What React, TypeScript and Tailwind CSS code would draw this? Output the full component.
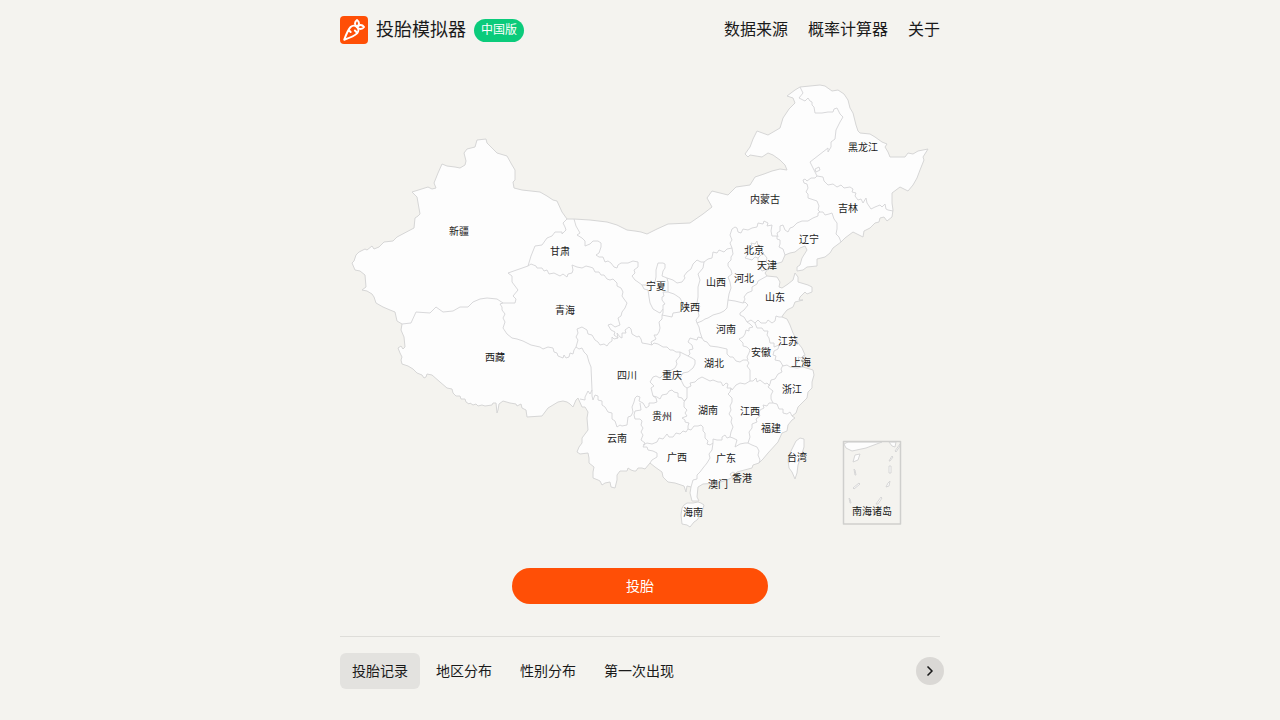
import React, { useState } from 'react';
import { Carrot, ChevronRight } from 'lucide-react';

interface RegionLabel {
  name: string;
  x: number;
  y: number;
}

const LABELS: RegionLabel[] = [
  { name: '黑龙江', x: 863, y: 148 },
  { name: '内蒙古', x: 765, y: 200 },
  { name: '吉林', x: 848, y: 209 },
  { name: '新疆', x: 459, y: 232 },
  { name: '辽宁', x: 809, y: 240 },
  { name: '甘肃', x: 560, y: 252 },
  { name: '北京', x: 754, y: 251 },
  { name: '天津', x: 767, y: 266 },
  { name: '河北', x: 744, y: 279 },
  { name: '山西', x: 716, y: 283 },
  { name: '宁夏', x: 656, y: 287 },
  { name: '山东', x: 775, y: 298 },
  { name: '陕西', x: 690, y: 308 },
  { name: '青海', x: 565, y: 311 },
  { name: '河南', x: 726, y: 330 },
  { name: '江苏', x: 788, y: 342 },
  { name: '安徽', x: 761, y: 353 },
  { name: '西藏', x: 495, y: 358 },
  { name: '上海', x: 801, y: 363 },
  { name: '湖北', x: 714, y: 364 },
  { name: '四川', x: 627, y: 376 },
  { name: '重庆', x: 672, y: 376 },
  { name: '浙江', x: 792, y: 390 },
  { name: '湖南', x: 708, y: 411 },
  { name: '江西', x: 750, y: 412 },
  { name: '贵州', x: 662, y: 417 },
  { name: '福建', x: 771, y: 429 },
  { name: '云南', x: 617, y: 439 },
  { name: '广西', x: 677, y: 458 },
  { name: '广东', x: 726, y: 459 },
  { name: '台湾', x: 797, y: 458 },
  { name: '香港', x: 742, y: 479 },
  { name: '澳门', x: 718, y: 485 },
  { name: '海南', x: 693, y: 513 },
  { name: '南海诸岛', x: 872, y: 512 },
];

const MAINLAND =
  'M352 263 L354 261 356 255 359 252 365 249 367 250 372 246 374 249 379 247 384 242 393 241 397 237 414 228 415 218 418 216 420 214 417 197 412 192 428 187 432 189 436 188 434 183 438 173 442 164 447 166 455 167 460 168 465 165 466 161 464 153 467 149 475 147 477 140 486 139 487 143 492 148 497 153 507 156 512 165 515 170 515 180 513 182 514 188 522 190 540 192 547 196 553 200 557 201 562 212 567 219 574 219 590 220 607 222 617 225 627 230 635 231 641 232 647 234 657 229 668 224 690 223 703 214 712 207 707 198 712 191 728 195 736 187 750 185 755 177 764 174 772 171 780 169 787 170 785 165 780 160 773 155 768 153 762 157 750 155 748 157 745 154 750 147 753 139 757 131 768 135 780 128 783 118 789 109 795 103 793 98 787 96 795 90 800 87 820 85 825 86 832 91 838 90 844 94 848 100 850 108 853 113 856 125 858 131 860 133 870 134 875 137 882 142 887 144 885 147 888 152 890 157 905 157 908 153 913 154 918 151 928 149 923 157 924 160 920 170 917 178 913 185 908 191 900 187 892 193 892 203 893 210 892 217 887 221 884 217 880 218 879 222 875 223 870 228 864 231 863 237 853 232 845 238 841 242 833 248 830 253 825 257 817 259 817 266 807 267 803 270 797 271 797 267 800 265 802 258 807 250 805 246 800 248 795 252 790 253 785 255 782 262 775 264 768 269 765 273 767 276 777 277 780 282 779 287 782 288 788 284 793 280 795 273 798 277 798 282 808 285 812 287 812 292 807 294 805 292 800 297 799 300 803 300 795 302 793 307 787 310 783 315 782 317 787 319 790 325 793 333 798 343 802 348 805 355 801 361 805 365 803 367 813 370 814 375 812 382 812 388 808 392 807 398 803 402 798 407 796 413 792 416 795 418 792 420 788 425 787 431 782 433 778 442 768 453 763 459 759 463 753 465 752 468 737 472 733 477 727 480 717 483 703 484 698 487 697 497 699 501 692 501 690 493 691 487 687 486 686 492 684 486 675 483 668 482 663 477 662 472 655 467 650 463 645 469 642 468 638 468 636 471 634 471 631 470 628 468 627 471 625 471 620 471 617 475 617 480 616 484 615 488 611 487 610 482 605 483 602 485 600 481 598 480 593 478 593 472 594 467 589 463 589 458 588 453 580 454 577 452 579 447 582 443 582 438 588 430 587 418 588 412 585 407 582 407 578 398 576 400 573 407 570 404 567 402 563 401 558 402 548 408 542 416 527 417 526 410 522 408 521 404 517 406 516 404 510 403 503 401 499 404 498 410 497 413 496 403 493 403 492 405 485 406 482 405 478 406 476 404 473 405 470 403 469 404 466 402 465 399 461 399 460 396 456 396 453 393 452 389 447 388 440 382 432 375 427 374 426 377 424 378 422 375 417 373 413 369 408 366 402 364 401 360 402 357 400 353 398 348 401 346 403 349 405 347 404 337 401 330 402 324 397 321 395 312 390 310 383 307 376 303 374 297 372 294 367 291 362 290 366 287 365 275 360 271 355 270 Z';

// Shared lines between neighbouring provinces
const BORDERS: string[] = [
  'M402 324 L411 323 416 312 430 313 436 307 443 312 453 311 460 307 468 307 473 302 480 299 487 298 497 299 503 303 515 303 516 299 513 296 518 290 512 282 512 276 508 273 528 266 531 256 535 246 542 245 547 238 552 236 555 232 562 232 562 234 566 230 565 227 563 223 567 219',
  'M528 266 L531 264 536 266 537 268 542 268 544 271 547 270 549 274 554 273 560 276 563 274 567 277 568 274 572 273 573 270 572 265 577 267 582 268 586 266 590 267 593 268 595 272 599 272 601 275 604 275 607 279 610 280 613 279 617 283 617 286 621 288 623 292 622 296 624 299 627 303 625 308 622 312 621 316 618 318 620 325 615 327 611 324 608 325 611 330 615 332 614 335 618 338 614 339 612 337 612 341 609 343 607 346 604 344 600 345 598 342 595 340 592 335 588 334 587 330 582 327 577 329 578 333 576 337 578 340 576 347',
  'M503 303 L500 304 502 307 502 310 505 314 503 318 505 322 503 328 507 334 512 338 517 339 523 341 531 345 540 347 543 349 548 347 553 348 554 352 557 353 558 356 563 358 564 355 566 358 569 357 570 353 573 354 574 350 576 347 579 349 582 348 584 352 587 355 589 362 591 367 592 390 590 394 588 391 585 397 585 400 580 399',
  'M592 390 L592 396 593 400 595 395 598 396 598 400 602 401 602 405 605 407 608 412 612 413 612 419 615 421 617 427 620 425 622 426 627 425 628 417 631 416 633 412 632 407 634 402 635 398 637 396 640 397 639 401 643 403 646 408 649 406 649 403 654 403 657 402 656 398 653 396 652 392 651 388 654 386 650 382 653 377 656 376 660 378 663 375 667 373 670 371 675 368 677 364 676 361 680 356 680 352 676 352 673 350 670 350 667 347 663 347 658 344 654 343 652 345 648 344 642 343 641 339 639 336 637 337 632 334 631 329 629 327 625 330 626 333 622 333 622 338 620 337 617 333 618 338',
  'M640 403 L641 410 635 411 634 415 635 419 640 419 642 421 641 425 643 428 641 432 643 435 641 440 645 443 643 447 647 447 648 450 653 451 657 453 657 457 652 460 650 463',
  'M643 445 L647 443 652 444 657 442 659 438 663 439 667 434 669 437 673 437 676 433 680 434 683 431 686 432 688 429 691 430 694 426 698 426 701 425 703 427 703 431 705 433 705 438 708 441 707 444 710 445 713 443',
  'M688 429 L688 426 689 423 685 422 685 420 682 418 687 416 685 413 687 410 684 407 684 402 687 398 687 388 684 386 680 378 683 373 688 372 693 368 695 364 695 360 692 358 688 356 684 354 680 352',
  'M687 398 L684 401 682 398 678 397 678 393 674 392 672 390 669 391 667 394 662 395 660 399 657 397 653 396',
  'M687 388 L691 386 690 383 695 382 698 379 702 377 706 379 710 381 713 380 718 382 721 382 723 386 726 383 728 384 727 388 731 388 732 390 736 385 740 383 745 384 750 381 753 381 756 378 757 382 760 380 765 384 767 383 770 386',
  'M688 356 L690 354 689 350 693 349 692 345 688 342 690 338 697 340 698 337 702 338 704 341 707 342 710 346 718 347 727 349 727 354 730 357 733 357 736 361 740 362 743 360 747 360 749 363 747 366 750 370 750 381',
  'M702 338 L700 332 699 327 697 323 696 320 699 316 698 311 700 306 697 303 698 297 698 287 700 280 698 274 703 268 704 262 701 262 697 260 693 264 691 269 687 272 684 276 685 278 682 282 677 283 673 280 667 278 662 276 663 271 665 268 665 264 663 263 658 263 656 270 656 277 655 282 650 283 647 285 642 285 644 289 648 290 649 297 650 303 653 309 658 312 660 313 663 309 663 305 665 304 662 300 662 297 664 296 663 292 668 292 668 282 667 278',
  'M668 292 L674 294 680 298 682 302 683 305 682 309 680 312 673 313 672 317 667 316 662 315 662 319 659 322 660 328 659 332 657 335 654 335 656 339 651 342 652 345',
  'M663 309 L663 313 662 315',
  'M697 323 L702 321 705 319 708 318 713 315 720 313 724 311 727 308 728 300 735 301 743 303 745 302 748 305 744 310 740 313 740 315 744 317 747 322 751 320 755 323 758 320 761 323 766 323 768 320 772 323 775 321 776 316 779 317 782 317',
  'M728 300 L729 294 731 288 730 282 728 277 732 274 731 270 728 266 728 263 731 260 731 257 733 254 732 248 727 249 724 252 719 250 717 253 713 252 712 258 708 259 704 262',
  'M732 248 L730 243 732 240 730 235 732 229 735 227 737 228 738 232 741 233 743 229 748 230 752 228 757 227 758 223 763 224 764 221 768 223 767 226 772 225 771 231 772 236 777 236 777 239 780 240 780 244 779 247 783 249 785 255',
  'M778 237 L777 233 780 231 780 226 783 225 785 230 788 232 790 228 793 227 797 223 802 221 808 221 813 218 818 216 818 213 820 212 823 212 825 215 829 214 832 213 834 219 837 223 837 229 836 234 839 237 841 242',
  'M820 212 L818 210 819 206 817 201 808 198 808 194 806 192 808 188 807 184 804 183 803 180 805 179 807 181 811 178 815 178 817 176 813 168 810 162 828 148 828 152 831 147 831 142 835 139 836 130 840 122 843 117 840 114 837 108 834 109 833 112 828 112 822 113 815 113 814 107 812 105 812 102 810 101 808 98 805 101 799 98 803 93 800 87',
  'M815 169 L819 167 820 170 816 172 Z',
  'M817 176 L823 177 824 181 828 185 833 184 837 187 841 185 844 188 850 187 853 189 852 192 856 193 855 196 858 200 861 199 863 203 866 198 867 203 871 209 875 207 880 205 882 207 885 204 886 209 888 210 893 211',
  'M767 276 L758 281 757 284 752 287 752 291 747 293 744 297 745 299 743 303',
  'M747 322 L750 324 753 327 749 328 749 331 746 330 745 334 743 337 739 339 743 343 743 346 747 347 750 350 749 353 747 357 748 360',
  'M755 323 L757 328 762 328 764 331 768 331 767 335 769 338 770 343 774 343 774 347 779 345 778 349 774 351 773 355 776 356 775 360 780 361 783 366 787 365 790 367 797 368 803 367',
  'M783 365 L781 369 782 372 778 374 775 379 771 380 770 384 768 387 773 391 771 395 771 399 773 403 769 403 767 406 763 405 764 408 760 410 759 413 760 416 756 419 757 422 752 424 752 428 749 432 750 437 748 443 752 445 757 447 759 451 758 455 760 460 759 463',
  'M773 403 L777 404 779 409 783 409 783 413 787 414 790 412 792 416',
  'M797 363 L799 360 798 357 801 358 804 355',
  'M731 388 L730 392 728 394 732 398 732 402 730 406 731 410 729 414 732 418 731 422 733 427 731 432 730 437 733 438 737 440 735 447 740 444 745 443 748 443',
  'M730 437 L727 438 725 435 722 437 722 440 717 440 713 439 713 443 712 450 709 454 710 458 707 463 703 468 700 472 697 475 697 479 693 480 691 487',
  'M574 219 L576 226 580 233 577 235 582 238 585 241 585 246 590 244 593 241 598 241 601 243 601 247 599 253 596 255 599 257 603 257 605 262 608 261 611 263 614 267 617 268 618 265 621 263 628 263 633 261 638 262 638 267 634 270 635 273 632 276 635 280 638 282 642 285',
  'M745 249 L752 246 751 243 755 244 757 241 758 246 762 246 761 250 764 253 761 255 758 258 755 257 752 260 745 258 748 254 Z',
  'M763 253 L767 258 766 262 769 265 768 269 762 271 760 268 758 266 758 258',
  'M733 472 L736 474 732 477 730 474 Z',
];

const TAIWAN = 'M800 438 L804 439 804 447 801 457 798 465 797 473 795 479 792 472 789 468 788 460 790 453 793 447 796 441 Z';

const HAINAN =
  'M682 508 L684 505 687 503 693 503 698 502 701 503 704 505 702 512 700 516 697 520 694 522 690 527 687 525 682 524 681 515 Z';

// Islets, dash segments and the coast corner of the South China Sea inset
const INSET: string[] = [
  'M844 444 L848 442 882 442 866 448 852 451 846 448 Z',
  'M889 442 L896 442 895 447 892 446 Z',
  'M855 455 L860 454 858 460 853 462 Z',
  'M900 444 L900 446 896 452 895 451 Z',
  'M892 456 L893 457 890 461 889 461 Z',
  'M889 466 L891 466 891 473 889 473 Z',
  'M888 483 L890 481 889 486 886 487 Z',
  'M881 497 L882 498 878 504 876 504 Z',
  'M854 469 L855 470 856 475 855 475 Z',
  'M859 483 L860 484 854 489 853 488 Z',
  'M849 498 L850 499 851 503 850 503 Z',
];

const ChinaMap: React.FC = () => (
  <svg
    viewBox="340 60 600 476"
    className="block w-full font-['Liberation_Sans','Noto_Sans_CJK_SC',sans-serif]"
    role="img"
    aria-label="中国地图"
  >
    <g fill="#fdfdfd" stroke="#d6d6d6" strokeWidth="1" strokeLinejoin="round">
      <path d={MAINLAND} />
      <path d={TAIWAN} />
      <path d={HAINAN} />
      {INSET.map((d) => (
        <path key={d} d={d} />
      ))}
      <rect x="843.5" y="441.5" width="57" height="82.5" fill="none" stroke="#cfcfcd" strokeWidth="1.5" />
    </g>
    <g fill="none" stroke="#d4d4d6" strokeWidth="0.9" strokeLinejoin="round">
      {BORDERS.map((d) => (
        <path key={d} d={d} />
      ))}
    </g>
    <g fill="#1a1a1a" fontSize="10" textAnchor="middle">
      {LABELS.map(({ name, x, y }) => (
        <text key={name} x={x} y={y + 3}>
          {name}
        </text>
      ))}
    </g>
  </svg>
);

const NAV_ITEMS = ['数据来源', '概率计算器', '关于'];

const Header: React.FC = () => (
  <header className="flex h-[60px] items-center justify-between">
    <div className="flex items-center gap-2">
      <span className="flex size-7 items-center justify-center rounded bg-[#ff4f06]">
        <Carrot className="size-6 text-white" strokeWidth={2} />
      </span>
      <h1 className="text-lg">投胎模拟器</h1>
      <span className="flex h-[23px] items-center rounded-full bg-[#0bcb7b] px-[7px] text-xs text-white">
        中国版
      </span>
    </div>
    <nav className="flex gap-5 text-base">
      {NAV_ITEMS.map((item) => (
        <a key={item} href="#">
          {item}
        </a>
      ))}
    </nav>
  </header>
);

const TABS = ['投胎记录', '地区分布', '性别分布', '第一次出现'];

const RecordTabs: React.FC = () => {
  const [active, setActive] = useState(TABS[0]);

  return (
    <div className="-mr-1 flex items-center justify-between">
      <div className="flex gap-1" role="tablist">
        {TABS.map((tab) => (
          <button
            key={tab}
            type="button"
            role="tab"
            aria-selected={tab === active}
            onClick={() => setActive(tab)}
            className={`h-9 rounded-md px-3 text-sm ${tab === active ? 'bg-[#e3e2df]' : ''}`}
          >
            {tab}
          </button>
        ))}
      </div>
      <button
        type="button"
        aria-label="下一页"
        className="flex size-7 items-center justify-center rounded-full bg-[#dad8d5]"
      >
        <ChevronRight className="size-4" strokeWidth={2.5} />
      </button>
    </div>
  );
};

const App: React.FC = () => {
  return (
    <div className="min-h-screen bg-[#f4f3ef] font-['Liberation_Sans','Noto_Sans_CJK_SC',sans-serif] text-[#1a1a1a]">
      <div className="mx-auto max-w-[600px]">
        <Header />
        <main>
          <ChinaMap />
          <div className="flex justify-center py-8">
            <button type="button" className="h-9 w-64 rounded-full bg-[#ff4f06] text-sm text-white">
              投胎
            </button>
          </div>
          <section className="border-t border-[#deddd9] pt-4">
            <RecordTabs />
          </section>
        </main>
      </div>
    </div>
  );
};

export default App;
